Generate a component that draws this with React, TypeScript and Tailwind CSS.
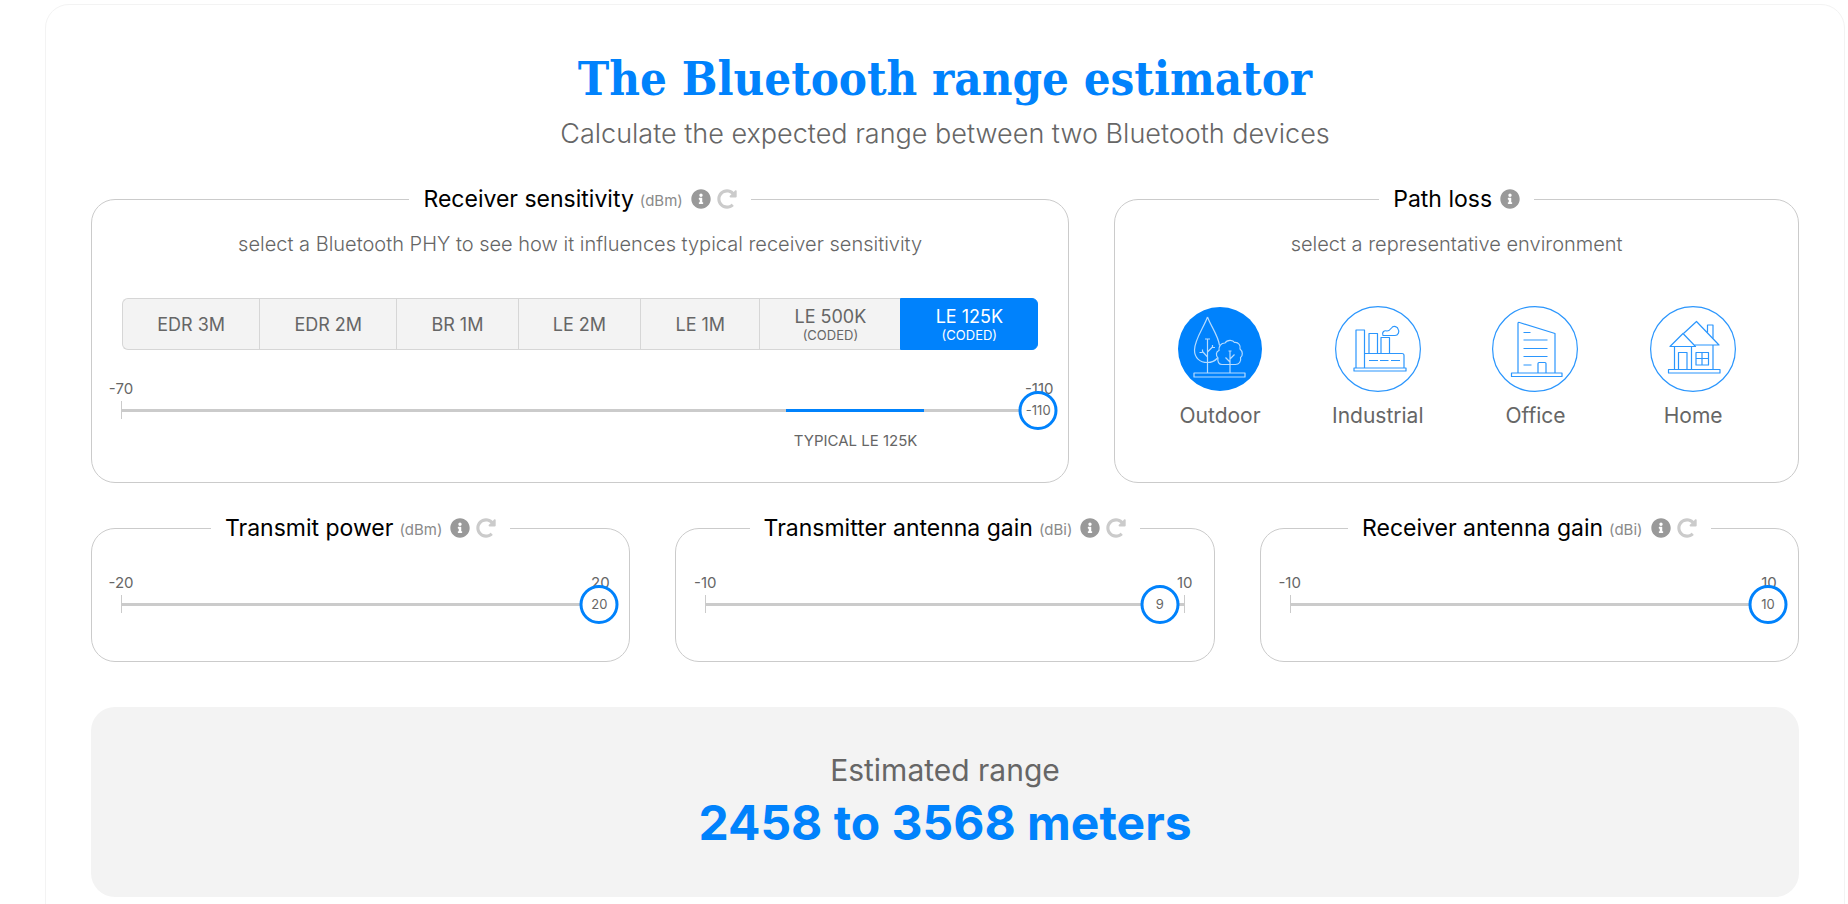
import { useState } from 'react';
import { FaInfoCircle, FaRedoAlt } from 'react-icons/fa';

type Phy = { name: string; coded?: boolean; typical: [number, number] };

const PHYS: Phy[] = [
  { name: 'EDR 3M', typical: [-83, -89] },
  { name: 'EDR 2M', typical: [-86, -92] },
  { name: 'BR 1M', typical: [-88, -94] },
  { name: 'LE 2M', typical: [-89, -95] },
  { name: 'LE 1M', typical: [-92, -98] },
  { name: 'LE 500K', coded: true, typical: [-95, -101] },
  { name: 'LE 125K', coded: true, typical: [-99, -105] },
];

function OutdoorIcon() {
  return (
    <>
      <path d="M30.5 11C27 21 17.5 33.5 17.5 44c0 7.5 5 12.5 13 12.5 4 0 7.5-1.5 10-4.5M30.5 11C33.5 19.5 41.5 30 42.5 39.5" />
      <path d="M30.5 67V33.5M30.5 51l-5-5.5v-2M25.5 46.5h-3M30.5 46l5-5M35.5 39v2.5h2.5M28 33h5" />
      <path d="M45 58.5c-3 0-5-3-4-6.5-2.5-2.5-2-6.5 1-7.5-.5-4.5 2-7.5 6-7.5 2-3.5 8-3.5 9.5-.5 4-.5 6.5 3 5.5 6.5 3 2.5 3 6.5.5 8.5 1 4-1.500 7-5 7z" />
      <path d="M53 67V45M53 56l-4.500-4.500M53 53l4.500-4.500M51.500 45h3" />
      <path d="M17 67h51v4H17z" />
    </>
  );
}

function IndustrialIcon() {
  return (
    <>
      <path d="M21 62V24h8.500v38M34 47.500V27.500h8.500v20M46 47.500v-16h8.500v16" />
      <path d="M29.500 47.500H67q2 0 2 2V62" />
      <path d="M34 54.500h9M45 54.500h8.500M56 54.500h9" />
      <path d="M48 29.500c-1.500-3 1-5.500 4-4.500 2 0 3-1 4.500-3 2-3 6.500-1 6.500 1 2 2.500 0 6.500-3 6.500z" />
      <path d="M19 62h52v3H19z" />
    </>
  );
}

function OfficeIcon() {
  return (
    <>
      <path d="M26 67V17.500q0-1.500 1.500-1L63 27.500V67" />
      <path d="M31.500 26.500h7M31.500 34h24M31.500 42.500h24M31.500 50.500h24M31.500 59h8" />
      <path d="M46 67v-9.500q0-1 1-1h6q1 0 1 1V67" />
      <path d="M19.500 67H70v3.500H19.500z" />
    </>
  );
}

function HomeIcon() {
  return (
    <>
      <path d="M33.500 27.500L46.500 15.500 69 39H44.500" />
      <path d="M20 40.500L33 27.500 45.500 40.500z" />
      <path d="M57.500 26.500V19H63v13.500" />
      <path d="M24.500 40.500V63M41.500 40.500V63M63 39v24" />
      <path d="M28.500 63V46.500h8.500V63" />
      <path d="M46 46.500h12.500V59H46zM52 46.500V59M46 52.500h12.500" />
      <path d="M18.500 63.500H70V67H18.500z" />
    </>
  );
}

const ENVIRONMENTS = [
  { name: 'Outdoor', Icon: OutdoorIcon },
  { name: 'Industrial', Icon: IndustrialIcon },
  { name: 'Office', Icon: OfficeIcon },
  { name: 'Home', Icon: HomeIcon },
];

type CardProps = {
  title: string;
  unit?: string;
  className?: string;
  onReset?: () => void;
  children: React.ReactNode;
};

function Card({ title, unit, className = '', onReset, children }: CardProps) {
  return (
    <fieldset className={`min-w-0 rounded-3xl border border-[#cbcbcb] ${className}`}>
      <legend className="mx-auto px-3.5">
        <span className="flex items-center text-[23px] leading-7 text-black">
          {title}
          {unit && <span className="ml-1.5 pt-1 text-[15px] leading-5 text-[#8a8a8a]">({unit})</span>}
          <button type="button" aria-label={`About ${title}`} className="ml-2 text-xl text-[#999999]">
            <FaInfoCircle />
          </button>
          {onReset && (
            <button type="button" aria-label={`Reset ${title}`} onClick={onReset} className="ml-1.5 text-xl text-[#cbcbcb]">
              <FaRedoAlt />
            </button>
          )}
        </span>
      </legend>
      {children}
    </fieldset>
  );
}

type SliderProps = {
  label: string;
  from: number;
  to: number;
  value: number;
  onChange: (value: number) => void;
  typical?: Phy;
};

function Slider({ label, from, to, value, onChange, typical }: SliderProps) {
  const percent = (v: number) => ((v - from) / (to - from)) * 100;
  const sign = to < from ? -1 : 1;

  return (
    <div className="-mx-px text-[15px] leading-5 text-[#666666]">
      <div className="flex justify-between">
        <span className="flex w-0 justify-center">{from}</span>
        <span className="flex w-0 justify-center">{to}</span>
      </div>
      <div className="relative mt-0.5 flex h-[18px] items-center border-x border-[#cbcbcb]">
        <div className="h-[3px] w-full bg-[#cbcbcb]" />
        {typical && (
          <div
            className="absolute h-[3px] bg-[#0082fc]"
            style={{
              left: `${percent(typical.typical[0])}%`,
              width: `${percent(typical.typical[1]) - percent(typical.typical[0])}%`,
            }}
          />
        )}
        <span
          className="absolute flex size-[39px] -translate-x-1/2 items-center justify-center rounded-full border-3 border-[#0082fc] bg-white text-[13px]"
          style={{ left: `${percent(value)}%` }}
        >
          {value}
        </span>
        <input
          type="range"
          aria-label={label}
          min={Math.min(from * sign, to * sign)}
          max={Math.max(from * sign, to * sign)}
          value={value * sign}
          onChange={(e) => onChange(Number(e.target.value) * sign)}
          className="absolute inset-x-0 h-10 w-full cursor-pointer opacity-0"
        />
      </div>
      {typical && (
        <div className="relative mt-3 h-5">
          <span
            className="absolute -translate-x-1/2 whitespace-nowrap"
            style={{ left: `${(percent(typical.typical[0]) + percent(typical.typical[1])) / 2}%` }}
          >
            TYPICAL {typical.name}
          </span>
        </div>
      )}
    </div>
  );
}

export default function App() {
  const [phy, setPhy] = useState(6);
  const [environment, setEnvironment] = useState('Outdoor');
  const [sensitivity, setSensitivity] = useState(-110);
  const [power, setPower] = useState(20);
  const [txGain, setTxGain] = useState(9);
  const [rxGain, setRxGain] = useState(10);

  return (
    <div className="min-h-screen overflow-hidden bg-white pt-1 pr-[3px] pl-[45px] font-['Inter',sans-serif] text-[#666666]">
      <main className="rounded-3xl border border-[#f3f3f3] px-[45px] pt-11 pb-12">
        <header className="text-center">
          <h1 className="font-['DejaVu_Serif_Condensed','DejaVu_Serif',serif] text-[47px] leading-[60px] font-bold text-[#0082fc]">
            The Bluetooth range estimator
          </h1>
          <p className="text-[27px] leading-[50px] font-light">
            Calculate the expected range between two Bluetooth devices
          </p>
        </header>

        <div className="mt-[26px] grid grid-cols-[10fr_7fr] gap-[45px]">
          <Card title="Receiver sensitivity" unit="dBm" className="px-[30px] pb-[31px]" onReset={() => setSensitivity(-90)}>
            <p className="mt-[17px] text-center text-xl leading-7 font-light">
              select a Bluetooth PHY to see how it influences typical receiver sensitivity
            </p>
            <div className="mt-10 flex h-[52px]">
              {PHYS.map((p, i) => (
                <button
                  key={p.name}
                  type="button"
                  aria-pressed={phy === i}
                  onClick={() => setPhy(i)}
                  className={`flex-auto border-y border-l pt-0.5 text-lg leading-5 first:rounded-l-md last:rounded-r-md last:border-r ${
                    phy === i ? 'border-[#0082fc] bg-[#0082fc] text-white' : 'border-[#d6d6d6] bg-[#f3f3f3]'
                  }`}
                >
                  {p.name}
                  {p.coded && <span className="block text-[13px] leading-4">(CODED)</span>}
                </button>
              ))}
            </div>
            <div className="mt-[29px]">
              <Slider
                label="Receiver sensitivity"
                from={-70}
                to={-110}
                value={sensitivity}
                onChange={setSensitivity}
                typical={PHYS[phy]}
              />
            </div>
          </Card>

          <Card title="Path loss" className="px-[26px]">
            <p className="mt-[17px] text-center text-xl leading-7 font-light">select a representative environment</p>
            <div className="mt-12 grid grid-cols-4">
              {ENVIRONMENTS.map(({ name, Icon }) => {
                const selected = environment === name;
                return (
                  <button
                    key={name}
                    type="button"
                    aria-pressed={selected}
                    onClick={() => setEnvironment(name)}
                    className="flex flex-col items-center gap-2 text-[21px] leading-8"
                  >
                    <svg
                      viewBox="0 0 86 86"
                      fill="none"
                      strokeLinejoin="round"
                      strokeWidth="1.2"
                      className={`size-[86px] ${selected ? 'stroke-[#b5dbff]' : 'stroke-[#2b96fd]'}`}
                    >
                      <circle cx="43" cy="43" r={selected ? 42 : 42.4} className={selected ? 'fill-[#0082fc] stroke-none' : ''} />
                      <Icon />
                    </svg>
                    {name}
                  </button>
                );
              })}
            </div>
          </Card>
        </div>

        <div className="mt-[31px] grid grid-cols-3 gap-[45px]">
          <Card title="Transmit power" unit="dBm" className="px-[30px] pt-[31px] pb-12" onReset={() => setPower(0)}>
            <Slider label="Transmit power" from={-20} to={20} value={power} onChange={setPower} />
          </Card>
          <Card title="Transmitter antenna gain" unit="dBi" className="px-[30px] pt-[31px] pb-12" onReset={() => setTxGain(0)}>
            <Slider label="Transmitter antenna gain" from={-10} to={10} value={txGain} onChange={setTxGain} />
          </Card>
          <Card title="Receiver antenna gain" unit="dBi" className="px-[30px] pt-[31px] pb-12" onReset={() => setRxGain(0)}>
            <Slider label="Receiver antenna gain" from={-10} to={10} value={rxGain} onChange={setRxGain} />
          </Card>
        </div>

        <section className="mt-[45px] rounded-3xl bg-[#f3f3f3] pt-[43px] pb-[45px] text-center">
          <p className="text-3xl leading-10">Estimated range</p>
          <p className="mt-1 text-5xl leading-[58px] font-bold text-[#0082fc]">2458 to 3568 meters</p>
        </section>
      </main>
    </div>
  );
}
